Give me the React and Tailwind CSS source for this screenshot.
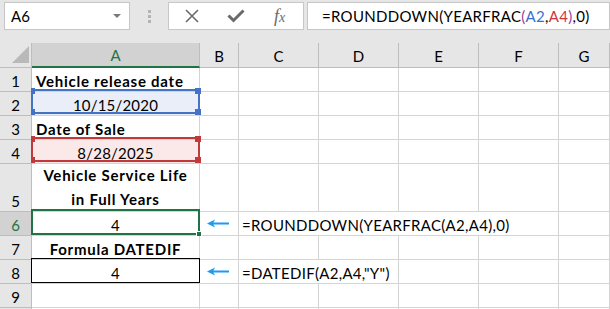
import React from "react";

const COLS = ["A", "B", "C", "D", "E", "F", "G"];

// rows of the sheet, A holds the content, formula spills over C..
const ROWS = [
  { n: 1, h: "h-[24px]", a: { text: "Vehicle release date", bold: true, left: true } },
  { n: 2, h: "h-[24px]", a: { text: "10/15/2020", ref: "blue" } },
  { n: 3, h: "h-[24px]", a: { text: "Date of Sale", bold: true, left: true } },
  { n: 4, h: "h-[24px]", a: { text: "8/28/2025", ref: "red" } },
  { n: 5, h: "h-[48px]", a: { lines: ["Vehicle Service Life", "in Full Years"], bold: true } },
  { n: 6, h: "h-[24px]", a: { text: "4", active: true }, arrow: true, formula: "=ROUNDDOWN(YEARFRAC(A2,A4),0)", span: 4 },
  { n: 7, h: "h-[24px]", a: { text: "Formula DATEDIF", bold: true } },
  { n: 8, h: "h-[24px]", a: { text: "4", boxed: true }, arrow: true, formula: '=DATEDIF(A2,A4,"Y")', span: 2 },
  { n: 9, h: "h-[24px]", a: {} },
  { n: "", h: "h-[24px]", a: {} },
];

const spanClass = { 2: "col-span-2", 4: "col-span-4" };

const Arrow = () => (
  <svg width="22" height="9" viewBox="0 0 22 9" className="ml-[7px]">
    <polygon points="0,4.5 8,0.5 6,4.5 8,8.5" fill="#1a9cf0" />
    <rect x="5" y="3.5" width="17" height="2" fill="#1a9cf0" />
  </svg>
);

const RefBox = ({ color }) => {
  const border = color === "blue" ? "border-[#4472c4]" : "border-[#c0393b]";
  const fill = color === "blue" ? "bg-[#4472c4]" : "bg-[#c0393b]";
  return (
    <div className={`absolute top-[-3px] bottom-[1px] left-[-1px] right-[-1px] border-2 ${border}`}>
      <div className={`absolute top-[-3px] left-[-2px] w-[4px] h-[6px] ${fill}`} />
      <div className={`absolute top-[-3px] right-[-3px] w-[6px] h-[6px] ${fill}`} />
      <div className={`absolute bottom-[-3px] left-[-2px] w-[4px] h-[6px] ${fill}`} />
      <div className={`absolute bottom-[-3px] right-[-3px] w-[6px] h-[6px] ${fill}`} />
    </div>
  );
};

const CellA = ({ a, h }) => {
  let bg = "";
  if (a.ref === "blue") bg = "bg-[#e9eef8]";
  if (a.ref === "red") bg = "bg-[#fbe9e9]";
  return (
    <div className={`relative ${h} border-r border-b border-[#d4d4d4] ${bg} flex items-end ${a.left ? "justify-start pl-[4px]" : "justify-center"}`}>
      {a.text && (
        <span className={`${a.bold ? "font-bold tracking-[0.75px]" : "tracking-[0.2px]"} leading-[20px] whitespace-nowrap`}>
          {a.text}
        </span>
      )}
      {a.lines && (
        <div className="flex flex-col items-center font-bold tracking-[0.75px] leading-[24px] whitespace-nowrap">
          {a.lines.map((l) => (
            <span key={l}>{l}</span>
          ))}
        </div>
      )}
      {a.ref && <RefBox color={a.ref} />}
      {a.active && (
        <div className="absolute top-[-3px] bottom-0 left-[-1px] right-[-1px] border-2 border-[#217346]">
          <div className="absolute bottom-[-4px] right-[-4px] w-[6px] h-[6px] bg-[#217346] border border-white" />
        </div>
      )}
      {a.boxed && <div className="absolute top-[-2px] bottom-0 left-[-1px] right-[-1px] border border-black" />}
    </div>
  );
};

const Row = ({ row }) => {
  const rest = row.span ? COLS.slice(2 + row.span) : COLS.slice(2);
  return (
    <>
      <div
        className={`${row.h} border-r border-b border-[#bdbdbd] flex items-end justify-center leading-[20px] ${
          row.a.active ? "bg-[#d2d2d2] text-[#217346]" : "bg-[#e6e6e6]"
        }`}
      >
        {row.n}
      </div>
      <CellA a={row.a} h={row.h} />
      <div className={`${row.h} border-r border-b border-[#d4d4d4] flex items-center`}>{row.arrow && <Arrow />}</div>
      {row.formula && (
        <div className={`${row.h} ${spanClass[row.span]} border-r border-b border-[#d4d4d4] flex items-end pl-[3px] leading-[20px] tracking-[0.3px] whitespace-nowrap`}>
          {row.formula}
        </div>
      )}
      {rest.map((c) => (
        <div key={c} className={`${row.h} border-r border-b border-[#d4d4d4]`} />
      ))}
    </>
  );
};

export default function App() {
  return (
    <div className="w-[610px] h-[309px] overflow-hidden bg-[#e6e6e6] text-black text-[15px] font-['Lato','Liberation_Sans',sans-serif]">
      {/* name box + formula bar */}
      <div className="h-[43px] flex items-start pt-[2px]">
        <div className="ml-[4px] w-[126px] h-[28px] bg-white border border-[#c6c6c6] flex items-center justify-between pl-[6px] pr-[8px]">
          <span>A6</span>
          <svg width="8" height="4" viewBox="0 0 8 4">
            <polygon points="0,0 8,0 4,4" fill="#7a7a7a" />
          </svg>
        </div>
        <div className="w-[38px] h-[28px] flex flex-col items-center justify-center gap-[2px]">
          <div className="w-[3px] h-[3px] bg-[#b3b3b3]" />
          <div className="w-[3px] h-[3px] bg-[#b3b3b3]" />
          <div className="w-[3px] h-[3px] bg-[#b3b3b3]" />
        </div>
        <div className="w-[136px] h-[28px] bg-white border border-[#c6c6c6] flex items-center">
          <svg width="16" height="16" viewBox="0 0 16 16" className="ml-[15px]">
            <path d="M2 2 L14 14 M14 2 L2 14" stroke="#6a6a6a" strokeWidth="1.6" fill="none" />
          </svg>
          <svg width="18" height="14" viewBox="0 0 18 14" className="ml-[27px]">
            <path d="M1.5 6.5 L6.5 11.5 L16.5 1.5" stroke="#6a6a6a" strokeWidth="3" fill="none" />
          </svg>
          <span className="ml-[29px] text-[#6a6a6a] italic font-['Liberation_Serif',serif] text-[18px] leading-none">
            f<span className="text-[14px]">x</span>
          </span>
        </div>
        <div className="ml-[3px] flex-1 h-[28px] bg-white border border-[#c6c6c6] flex items-center pl-[14px] tracking-[0.3px] whitespace-nowrap">
          <span>=ROUNDDOWN(YEARFRAC</span>
          <span className="text-[#9c3c9c]">(</span>
          <span className="text-[#3a6fc9]">A2</span>
          <span>,</span>
          <span className="text-[#d0343a]">A4</span>
          <span className="text-[#9c3c9c]">)</span>
          <span>,0)</span>
        </div>
      </div>

      {/* sheet grid */}
      <div className="grid grid-cols-[32px_168px_39px_80px_80px_80px_80px_51px] bg-white">
        <div className="h-[25px] bg-[#e6e6e6] border-r border-b border-[#bdbdbd] relative">
          <svg width="17" height="17" viewBox="0 0 17 17" className="absolute left-[12px] top-[3px]">
            <polygon points="17,0 17,17 0,17" fill="#b9b9b9" />
          </svg>
        </div>
        {COLS.map((c) => (
          <div
            key={c}
            className={`h-[25px] flex items-center justify-center pt-[2px] ${
              c === "A"
                ? "bg-[#d2d2d2] text-[#217346] border-r border-r-[#bdbdbd] border-b-2 border-b-[#217346]"
                : "bg-[#e6e6e6] border-r border-b border-[#bdbdbd]"
            }`}
          >
            {c}
          </div>
        ))}
        {ROWS.map((r, i) => (
          <Row key={i} row={r} />
        ))}
      </div>
    </div>
  );
}
